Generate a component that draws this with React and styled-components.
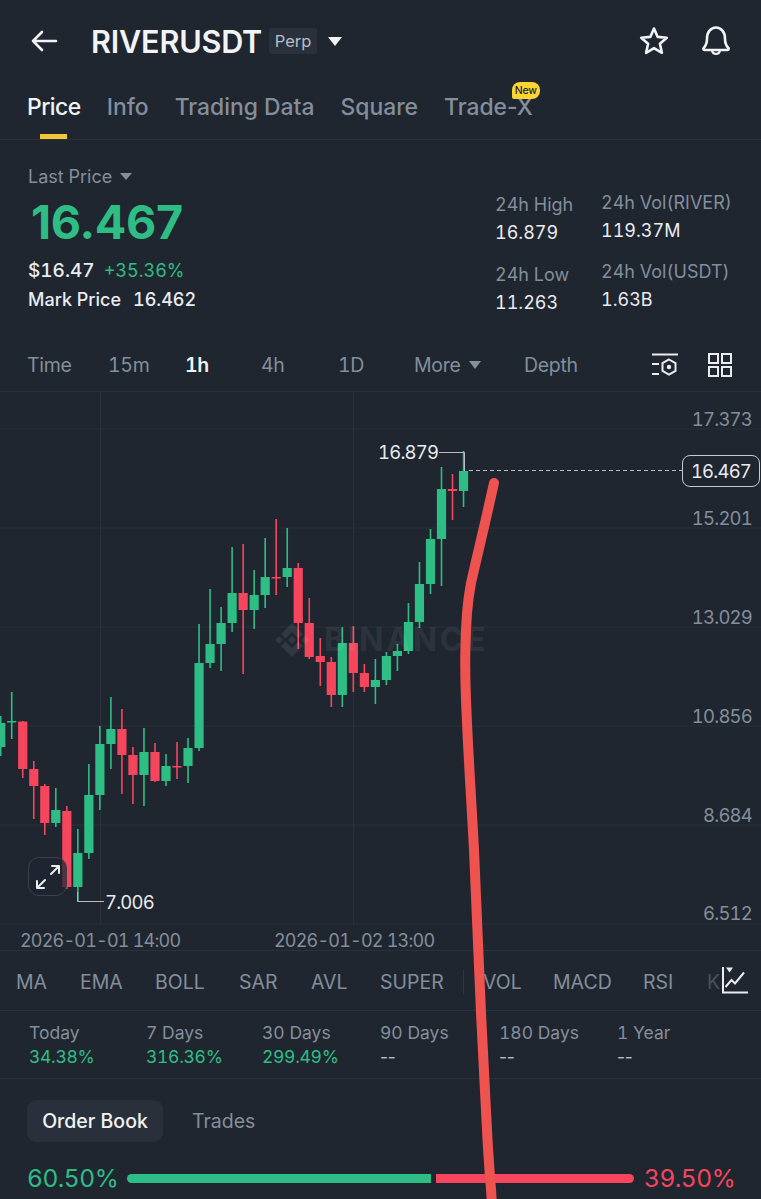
import React from 'react';
import styled, { createGlobalStyle } from 'styled-components';

const GREEN = '#2EBD85';
const RED = '#F6465D';
const GRAY = '#848E9C';
const WHITE = '#EAECEF';
const CHART_TOP = 392;

const Global = createGlobalStyle`
  html, body { margin: 0; padding: 0; background: #1F2630; }
  * { box-sizing: border-box; }
  body { font-family: Inter, "Noto Sans", sans-serif; font-variant-numeric: tabular-nums; }
`;

const Page = styled.div`
  position: relative;
  width: 761px;
  height: 1199px;
  overflow: hidden;
  background: #1F2630;
  color: ${WHITE};
`;

const Header = styled.header`
  height: 82px;
  display: flex;
  align-items: center;
  padding: 0 30px 0 30px;
`;
const Title = styled.h1`
  margin: 0 0 0 33px;
  font-size: 30.6px;
  font-weight: 600;
  letter-spacing: -0.2px;
  color: #F2F3F5;
`;
const Badge = styled.span`
  margin-left: 7px;
  width: 48px;
  height: 26px;
  display: flex;
  align-items: center;
  justify-content: center;
  border-radius: 3px;
  background: #2A313C;
  font-size: 16.5px;
  color: #B7BDC6;
`;
const Caret = styled.span`
  width: 0;
  height: 0;
  border-left: ${p => p.$size}px solid transparent;
  border-right: ${p => p.$size}px solid transparent;
  border-top: ${p => p.$size * 1.25}px solid ${p => p.$color};
  margin-left: ${p => p.$gap}px;
`;
const HeaderIcons = styled.div`
  margin-left: auto;
  display: flex;
  align-items: center;
  gap: 32px;
`;

const Tabs = styled.nav`
  height: 58px;
  display: flex;
  gap: 26px;
  padding: 10px 0 0 27px;
  border-bottom: 1px solid #2A313B;
`;
const Tab = styled.div`
  position: relative;
  height: 30px;
  font-size: 22.9px;
  line-height: 30px;
  font-weight: 500;
  font-variant-numeric: normal;
  letter-spacing: ${p => (p.$active ? '-0.5px' : '0')};
  color: ${p => (p.$active ? '#F2F3F5' : GRAY)};
  ${p => p.$active && `
    &::after {
      content: '';
      position: absolute;
      left: 13px;
      top: 42px;
      width: 27px;
      height: 5px;
      background: #F3C737;
    }
  `}
`;
const NewBadge = styled.span`
  position: absolute;
  right: -7px;
  top: -10px;
  width: 28px;
  height: 17px;
  border-radius: 8px 8px 8px 2px;
  background: #FCD535;
  color: #1F2630;
  font-size: 10.5px;
  line-height: 17px;
  font-weight: 500;
  text-align: center;
  letter-spacing: -0.2px;
`;

const PriceSection = styled.section`
  height: 200px;
  display: flex;
  padding-left: 28px;
`;
const PriceLeft = styled.div`
  padding-top: 24px;
`;
const LastPrice = styled.div`
  display: flex;
  align-items: center;
  height: 24px;
  font-size: 18px;
  color: ${GRAY};
`;
const BigPrice = styled.div`
  margin: 6px 0 0 3px;
  height: 56px;
  font-size: 46.7px;
  line-height: 56px;
  font-weight: 700;
  font-variant-numeric: normal;
  letter-spacing: -0.3px;
  color: ${GREEN};
`;
const FiatRow = styled.div`
  margin-top: 7px;
  height: 26px;
  display: flex;
  gap: 9px;
  align-items: center;
  font-size: 19px;
  font-weight: 500;
`;
const Change = styled.span`
  font-size: 18px;
  color: ${GREEN};
  font-weight: 400;
`;
const MarkRow = styled.div`
  margin-top: 3px;
  height: 26px;
  display: flex;
  gap: 12px;
  align-items: center;
  font-size: 18px;
  font-weight: 500;
`;
const StatsGrid = styled.div`
  margin-left: auto;
  display: flex;
  padding-right: 30px;
`;
const StatColumn = styled.div`
  width: ${p => p.$width}px;
  padding-top: ${p => p.$top}px;
`;
const StatLabel = styled.div`
  height: 24px;
  line-height: 24px;
  font-size: 18px;
  color: ${GRAY};
  white-space: nowrap;
  margin-top: ${p => p.$gap || 0}px;
`;
const StatValue = styled.div`
  height: 24px;
  line-height: 24px;
  margin-top: 4px;
  font-size: 18px;
  color: ${WHITE};
`;

const IntervalBar = styled.div`
  position: relative;
  height: 52px;
  display: flex;
  align-items: center;
  padding-bottom: 2px;
  border-bottom: 1px solid #2A313B;
`;
const Interval = styled.div`
  position: absolute;
  left: ${p => p.$x}px;
  top: 13px;
  display: flex;
  align-items: center;
  font-size: 19.5px;
  line-height: 24px;
  letter-spacing: -0.3px;
  font-weight: ${p => (p.$active ? 600 : 400)};
  color: ${p => (p.$active ? '#F2F3F5' : GRAY)};
`;
const BarIcons = styled.div`
  margin-left: auto;
  padding-right: 29px;
  display: flex;
  align-items: center;
  gap: 30px;
`;

const Chart = styled.div`
  position: relative;
  height: 559px;
  border-bottom: 1px solid #2A313B;
  svg.plot { display: block; }
`;
const AxisLabel = styled.span`
  position: absolute;
  right: 9px;
  top: ${p => p.$y - CHART_TOP - 12}px;
  font-size: 18.5px;
  line-height: 24px;
  letter-spacing: -0.8px;
  color: ${GRAY};
`;
const DateLabel = styled.span`
  position: absolute;
  left: ${p => p.$x}px;
  top: 537px;
  font-size: 18px;
  line-height: 24px;
  letter-spacing: -0.8px;
  color: ${GRAY};
`;
const ExtremeLabel = styled.span`
  position: absolute;
  left: ${p => p.$x}px;
  top: ${p => p.$y - CHART_TOP - 12}px;
  font-size: 18.5px;
  line-height: 24px;
  letter-spacing: -0.8px;
  color: ${WHITE};
`;
const LastBox = styled.div`
  position: absolute;
  left: 682px;
  top: 63px;
  width: 78px;
  height: 32px;
  display: flex;
  align-items: center;
  justify-content: center;
  border: 1px solid #C5CAD1;
  border-radius: 8px;
  background: #1F2630;
  font-size: 18.5px;
  letter-spacing: -0.8px;
  color: ${WHITE};
`;
const ExpandButton = styled.div`
  position: absolute;
  left: 28px;
  top: 465px;
  width: 39px;
  height: 39px;
  display: flex;
  align-items: center;
  justify-content: center;
  border: 1px solid #3A414C;
  border-radius: 11px;
  background: rgba(31, 38, 48, 0.72);
`;
const Watermark = styled.div`
  position: absolute;
  left: 275px;
  top: 228px;
  display: flex;
  align-items: center;
  gap: 15px;
  font-size: 32px;
  line-height: 40px;
  font-weight: 700;
  letter-spacing: 2.6px;
  color: rgba(255, 255, 255, 0.085);
`;

const IndicatorBar = styled.div`
  position: relative;
  height: 60px;
  border-bottom: 1px solid #2A313B;
`;
const Indicator = styled.span`
  position: absolute;
  left: ${p => p.$x}px;
  top: 19px;
  font-size: 19.5px;
  line-height: 24px;
  color: ${p => (p.$faded ? '#4A515C' : GRAY)};
`;
const IndicatorDivider = styled.span`
  position: absolute;
  left: 463px;
  top: 19px;
  width: 1px;
  height: 24px;
  background: #2F3641;
`;
const IndicatorIcon = styled.div`
  position: absolute;
  right: 0;
  top: 0;
  height: 59px;
  width: 41px;
  padding: 15px 0 0 2px;
  background: #1F2630;
`;

const PerfRow = styled.div`
  height: 68px;
  display: grid;
  grid-template-columns: 117px 116px 118px 119px 118px 1fr;
  padding: 10px 0 0 29px;
  border-bottom: 1px solid #2A313B;
`;
const PerfLabel = styled.div`
  font-size: 17.5px;
  line-height: 24px;
  color: ${GRAY};
`;
const PerfValue = styled.div`
  font-size: 17.5px;
  line-height: 24px;
  letter-spacing: -0.3px;
  font-variant-numeric: ${p => (p.$up ? 'tabular-nums' : 'normal')};
  color: ${p => (p.$up ? GREEN : '#B7BDC6')};
`;

const BookTabs = styled.div`
  display: flex;
  align-items: center;
  gap: 29px;
  padding: 21px 0 0 27px;
`;
const Pill = styled.div`
  width: 136px;
  height: 42px;
  display: flex;
  align-items: center;
  justify-content: center;
  border-radius: 9px;
  background: #29303B;
  font-size: 19.5px;
  font-weight: 500;
  color: #F2F3F5;
`;
const PlainTab = styled.div`
  font-size: 19.5px;
  color: ${GRAY};
`;
const RatioRow = styled.div`
  display: flex;
  align-items: center;
  margin-top: 20px;
  padding-left: 27px;
  height: 32px;
`;
const RatioText = styled.span`
  width: ${p => p.$width}px;
  font-size: 24.5px;
  line-height: 32px;
  letter-spacing: -0.5px;
  color: ${p => p.$color};
  white-space: nowrap;
`;
const BarGreen = styled.div`
  margin-left: 10px;
  width: 304px;
  height: 9px;
  background: ${GREEN};
  border-radius: 5px 0 0 5px;
`;
const BarRed = styled.div`
  margin: 0 10px 0 5px;
  width: 198px;
  height: 9px;
  background: ${RED};
  border-radius: 0 5px 5px 0;
`;
const Annotation = styled.svg`
  position: absolute;
  left: 0;
  top: 0;
  pointer-events: none;
`;

// x index follows 11px spacing; values are [wickTop, bodyTop, bodyBottom, wickBottom, up]
const candles = [
  [716, 723, 747, 756, 1], [692, 721, 722.5, 739, 1], [721, 721.5, 769, 778, 0], [761, 769, 786, 819, 0],
  [784, 786, 823, 835, 0], [788, 810, 823, 827, 1], [806, 811, 887, 889, 0], [829, 853, 887, 902, 1],
  [764, 795, 853, 859, 1], [726, 744, 795, 810, 1], [697, 729, 744, 769, 1], [709, 729, 755, 794, 0],
  [747, 755, 775, 804, 0], [728, 752, 775, 806, 1], [743, 752, 781, 782, 0], [754, 766, 781, 786, 1],
  [742, 766, 767.5, 779, 0], [738, 748, 766, 783, 1], [624, 663, 748, 751, 1], [589, 644, 663, 668, 1],
  [607, 623, 644, 671, 1], [547, 593, 623, 632, 1], [544, 593, 610, 674, 0], [570, 595, 610, 629, 1],
  [538, 577, 595, 608, 1], [519, 577, 578.5, 595, 0], [528, 568, 577, 587, 1], [563, 568, 623, 649, 0],
  [598, 623, 657, 659, 0], [638, 656, 662, 686, 0], [657, 662, 695, 707, 0], [627, 643, 695, 707, 1],
  [626, 643, 673, 692, 0], [664, 673, 687, 692, 0], [659, 680, 687, 704, 1], [652, 656, 680, 685, 1],
  [644, 651, 656, 671, 1], [603, 622, 651, 654, 1], [562, 584, 622, 628, 1], [529, 539, 584, 594, 1],
  [467, 489, 539, 586, 1], [474, 489, 491, 520, 0], [451, 471, 491, 507, 1],
];

const gridY = [429, 528, 627, 726, 825, 924];
const axis = [['17.373', 419], ['15.201', 518], ['13.029', 617], ['10.856', 716], ['8.684', 815], ['6.512', 913]];
const intervals = [['Time', 27], ['15m', 108], ['1h', 185, true], ['4h', 261], ['1D', 338]];
const indicatorsList = [
  ['MA', 16], ['EMA', 80], ['BOLL', 155], ['SAR', 239], ['AVL', 311], ['SUPER', 380],
  ['VOL', 483], ['MACD', 553], ['RSI', 643], ['K', 707, true],
];
const perf = [
  ['Today', '34.38%', true], ['7 Days', '316.36%', true], ['30 Days', '299.49%', true],
  ['90 Days', '--'], ['180 Days', '--'], ['1 Year', '--'],
];

const Candle = ({ index, c }) => {
  const [wt, bt, bb, wb, up] = c;
  const x = 0.7 + index * 11.02;
  const color = up ? GREEN : RED;
  const top = CHART_TOP;
  return (
    <g fill={color}>
      <rect x={x - 0.8} y={wt - top} width={1.6} height={wb - wt} />
      <rect x={x - 4.6} y={bt - top} width={9.2} height={bb - bt} />
    </g>
  );
};

const PlotSvg = () => (
  <svg className="plot" width="761" height="558" viewBox="0 0 761 558">
    {gridY.map(y => <line key={y} x1="0" x2="761" y1={y - CHART_TOP} y2={y - CHART_TOP} stroke="#2A313B" />)}
    <line x1="100.5" x2="100.5" y1="0" y2="532" stroke="#2A313B" />
    <line x1="353.5" x2="353.5" y1="0" y2="532" stroke="#2A313B" />
    {candles.map((c, i) => <Candle key={i} index={i} c={c} />)}
    <path d="M439 60.5H464.5V79" fill="none" stroke="#B7BDC6" strokeWidth="1" />
    <path d="M77.7 500V509.5H104" fill="none" stroke="#B7BDC6" strokeWidth="1" />
    <line x1="469" x2="682" y1="78.5" y2="78.5" stroke="#B7BDC6" strokeWidth="1" strokeDasharray="4 3" />
  </svg>
);

const BackIcon = () => (
  <svg width="28" height="24" viewBox="0 0 28 24" fill="none" stroke="#F2F3F5" strokeWidth="2.6" strokeLinecap="round" strokeLinejoin="round">
    <path d="M26 12H3M12 3l-9 9 9 9" />
  </svg>
);
const StarIcon = () => (
  <svg width="30" height="30" viewBox="0 0 30 30" fill="none" stroke="#F2F3F5" strokeWidth="2.6" strokeLinejoin="round">
    <path d="M15 2.5l3.7 8.4 9.1.9-6.900 6 2 9-7.900-4.700-7.900 4.700 2-9-6.900-6 9.100-.9z" />
  </svg>
);
const BellIcon = () => (
  <svg width="30" height="32" viewBox="0 0 30 32" fill="none" stroke="#F2F3F5" strokeWidth="2.6" strokeLinejoin="round" strokeLinecap="round">
    <path d="M6 13.500C6 7 9.800 2.500 15 2.500S24 7 24 13.500c0 4.500.8 7 3.200 9.300.9.900.5 2.200-.9 2.200H3.700c-1.400 0-1.800-1.300-.9-2.200C5.200 20.500 6 18 6 13.500z" />
    <path d="M11 25.500c.4 2.300 2 3.500 4 3.500s3.600-1.200 4-3.500" strokeWidth="2" />
  </svg>
);
const SettingsIcon = () => (
  <svg width="26" height="24" viewBox="0 0 26 24" fill="none" stroke="#EAECEF" strokeWidth="2">
    <path d="M0 1.500H26M0 11h7M0 21h7" />
    <path d="M17 6.500l6.500 3.700v7.600L17 21.500l-6.500-3.700v-7.600z" />
    <circle cx="17" cy="14" r="2.200" fill="#EAECEF" stroke="none" />
  </svg>
);
const GridIcon = () => (
  <svg width="24" height="24" viewBox="0 0 24 24" fill="none" stroke="#EAECEF" strokeWidth="2">
    <rect x="1" y="1" width="9" height="9" /><rect x="14" y="1" width="9" height="9" />
    <rect x="1" y="14" width="9" height="9" /><rect x="14" y="14" width="9" height="9" />
  </svg>
);
const ExpandIcon = () => (
  <svg width="26" height="26" viewBox="0 0 26 26" fill="none" stroke="#EAECEF" strokeWidth="2" strokeLinecap="round" strokeLinejoin="round">
    <path d="M16 10l8-8M17 2h7v7M10 16l-8 8M2 17v7h7" />
  </svg>
);
const IndicatorsIcon = () => (
  <svg width="26" height="28" viewBox="0 0 26 28" fill="none" stroke="#EAECEF" strokeWidth="2">
    <path d="M1 1V26.500H26" />
    <path d="M3.500 21l6-7 3.500 3.500 9-11" />
    <path d="M4 1.500h7l-3.500 5z" fill="#EAECEF" stroke="none" />
  </svg>
);
const BinanceMark = () => (
  <svg width="34" height="36" viewBox="0 0 34 36" fill="rgba(255,255,255,0.085)">
    <path d="M17 1l11 11-4.500 4.500L17 10l-6.500 6.500L6 12z" />
    <path d="M4 14l4 4-4 4-4-4z" />
    <path d="M30 14l4 4-4 4-4-4z" />
    <path d="M17 14l4 4-4 4-4-4z" />
    <path d="M17 35L6 24l4.500-4.500L17 26l6.500-6.500L28 24z" />
  </svg>
);

export default function App() {
  return (
    <Page>
      <Global />
      <Header>
        <BackIcon />
        <Title>RIVERUSDT</Title>
        <Badge>Perp</Badge>
        <Caret $size={7.5} $color="#F2F3F5" $gap={11} />
        <HeaderIcons>
          <StarIcon />
          <BellIcon />
        </HeaderIcons>
      </Header>

      <Tabs>
        <Tab $active>Price</Tab>
        <Tab>Info</Tab>
        <Tab>Trading Data</Tab>
        <Tab>Square</Tab>
        <Tab>Trade-X<NewBadge>New</NewBadge></Tab>
      </Tabs>

      <PriceSection>
        <PriceLeft>
          <LastPrice>Last Price<Caret $size={6} $color={GRAY} $gap={8} /></LastPrice>
          <BigPrice>16.467</BigPrice>
          <FiatRow><span>$16.47</span><Change>+35.36%</Change></FiatRow>
          <MarkRow><span>Mark Price</span><span>16.462</span></MarkRow>
        </PriceLeft>
        <StatsGrid>
          <StatColumn $width={106} $top={53}>
            <StatLabel>24h High</StatLabel>
            <StatValue>16.879</StatValue>
            <StatLabel $gap={18}>24h Low</StatLabel>
            <StatValue>11.263</StatValue>
          </StatColumn>
          <StatColumn $width={130} $top={51}>
            <StatLabel>24h Vol(RIVER)</StatLabel>
            <StatValue>119.37M</StatValue>
            <StatLabel $gap={17}>24h Vol(USDT)</StatLabel>
            <StatValue>1.63B</StatValue>
          </StatColumn>
        </StatsGrid>
      </PriceSection>

      <IntervalBar>
        {intervals.map(([t, x, a]) => <Interval key={t} $x={x} $active={a}>{t}</Interval>)}
        <Interval $x={414}>More<Caret $size={6.5} $color={GRAY} $gap={8} /></Interval>
        <Interval $x={524}>Depth</Interval>
        <BarIcons>
          <SettingsIcon />
          <GridIcon />
        </BarIcons>
      </IntervalBar>

      <Chart>
        <PlotSvg />
        <Watermark><BinanceMark /><span>BINANCE</span></Watermark>
        {axis.map(([t, y]) => <AxisLabel key={t} $y={y}>{t}</AxisLabel>)}
        <ExtremeLabel $x={378} $y={452}>16.879</ExtremeLabel>
        <ExtremeLabel $x={105} $y={902}>7.006</ExtremeLabel>
        <LastBox>16.467</LastBox>
        <ExpandButton><ExpandIcon /></ExpandButton>
        <DateLabel $x={20}>2026-01-01 14:00</DateLabel>
        <DateLabel $x={274}>2026-01-02 13:00</DateLabel>
      </Chart>

      <IndicatorBar>
        {indicatorsList.map(([t, x, f]) => <Indicator key={t} $x={x} $faded={f}>{t}</Indicator>)}
        <IndicatorDivider />
        <IndicatorIcon><IndicatorsIcon /></IndicatorIcon>
      </IndicatorBar>

      <PerfRow>
        {perf.map(([l, v, up]) => (
          <div key={l}>
            <PerfLabel>{l}</PerfLabel>
            <PerfValue $up={up}>{v}</PerfValue>
          </div>
        ))}
      </PerfRow>

      <BookTabs>
        <Pill>Order Book</Pill>
        <PlainTab>Trades</PlainTab>
      </BookTabs>

      <RatioRow>
        <RatioText $width={90} $color={GREEN}>60.50%</RatioText>
        <BarGreen />
        <BarRed />
        <RatioText $width={90} $color={RED}>39.50%</RatioText>
      </RatioRow>

      <Annotation width="761" height="1199" viewBox="0 0 761 1199">
        <path
          d="M494 483C488 510 480 545 474 570C470 585 467 605 466 630C465.500 645 465 655 465.300 670C465.500 715 470 775 474 850C477 930 482 1040 487 1130C489 1170 491 1185 492 1205"
          fill="none"
          stroke="#EF5350"
          strokeWidth="10"
          strokeLinecap="round"
        />
      </Annotation>
    </Page>
  );
}
